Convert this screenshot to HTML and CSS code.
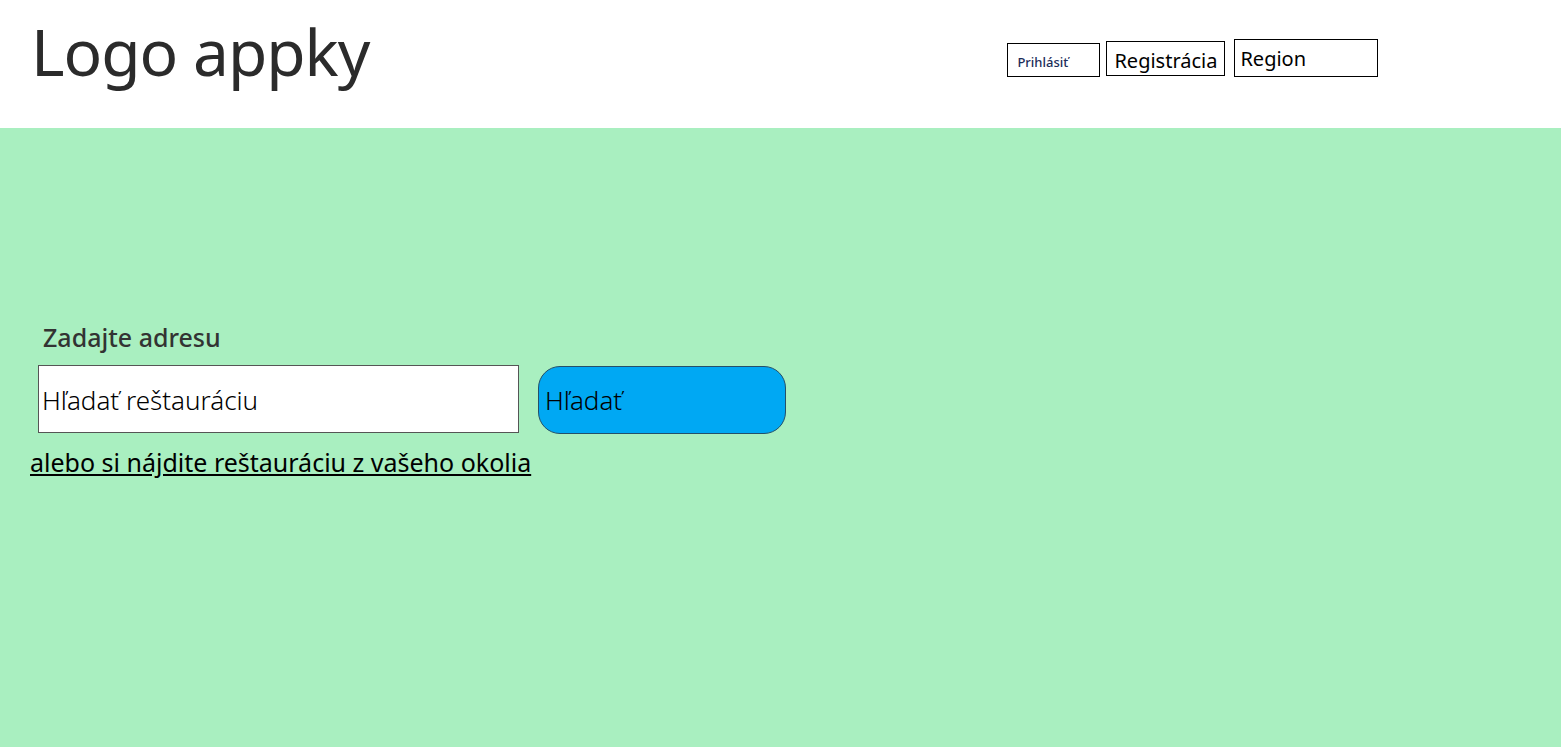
FILE: index.html
```html
<!DOCTYPE html>
<html lang="sk">
<head>
<meta charset="utf-8">
<title>Logo appky</title>
<link rel="stylesheet" href="styles.css">
</head>
<body>
<header class="header">
  <div class="logo">Logo appky</div>
  <nav class="nav">
    <button class="nav-item btn-login">Prihlásiť</button>
    <button class="nav-item btn-register">Registrácia</button>
    <div class="nav-item region">Region</div>
  </nav>
</header>
<main class="main">
  <h2 class="label">Zadajte adresu</h2>
  <div class="search-row">
    <div class="search-input">Hľadať reštauráciu</div>
    <button class="search-btn">Hľadať</button>
  </div>
  <a class="nearby" href="#">alebo si nájdite reštauráciu z vašeho okolia</a>
</main>
</body>
</html>
```
FILE: styles.css
```css
html, body {
  margin: 0;
  padding: 0;
  height: 100%;
}
body {
  font-family: "Noto Sans", "Open Sans", sans-serif;
  background: #a9efc0;
  color: #000;
}
.header {
  height: 128px;
  background: #fff;
  display: flex;
  align-items: flex-start;
}
.logo {
  margin-left: 31px;
  margin-top: 8px;
  font-size: 64px;
  line-height: 88px;
  font-weight: 400;
  color: #2b2b2b;
  letter-spacing: -1px;
}
.nav {
  display: flex;
  align-items: flex-start;
  margin-left: 638px;
  margin-top: 39px;
}
.nav-item {
  font-family: inherit;
  background: #fff;
  border: 1px solid #000;
  box-sizing: border-box;
  text-align: left;
  color: #000;
}
.btn-login {
  width: 93px;
  height: 34px;
  margin-top: 4px;
  padding: 3px 0 0 9px;
  font-size: 13px;
  font-weight: 500;
  color: #1c2d5a;
}
.btn-register {
  width: 119px;
  height: 35px;
  margin-top: 2px;
  margin-left: 6px;
  padding: 4px 0 0 7px;
  font-size: 20px;
  line-height: 30px;
}
.region {
  width: 144px;
  height: 38px;
  margin-left: 9px;
  padding: 0 0 0 5px;
  font-size: 20px;
  line-height: 38px;
}
.main {
  padding: 193px 0 0 30px;
}
.label {
  margin: 0 0 0 13px;
  font-size: 25px;
  font-weight: 500;
  color: #333;
  line-height: 32px;
}
.search-row {
  display: flex;
  align-items: flex-start;
  margin-top: 12px;
  margin-left: 8px;
}
.search-input {
  width: 481px;
  height: 68px;
  box-sizing: border-box;
  background: #fff;
  border: 1px solid #555;
  padding-left: 3px;
  font-size: 26px;
  font-weight: 300;
  line-height: 68px;
}
.search-btn {
  width: 248px;
  height: 68px;
  margin-left: 19px;
  margin-top: 1px;
  box-sizing: border-box;
  background: #00a8f3;
  border: 1px solid #24506a;
  border-radius: 22px;
  padding: 0 0 0 6px;
  text-align: left;
  font-family: inherit;
  font-size: 26px;
  font-weight: 300;
  color: #000;
}
.nearby {
  display: inline-block;
  margin-top: 12px;
  font-size: 25px;
  line-height: 32px;
  color: #000;
  text-decoration: underline;
}
```
